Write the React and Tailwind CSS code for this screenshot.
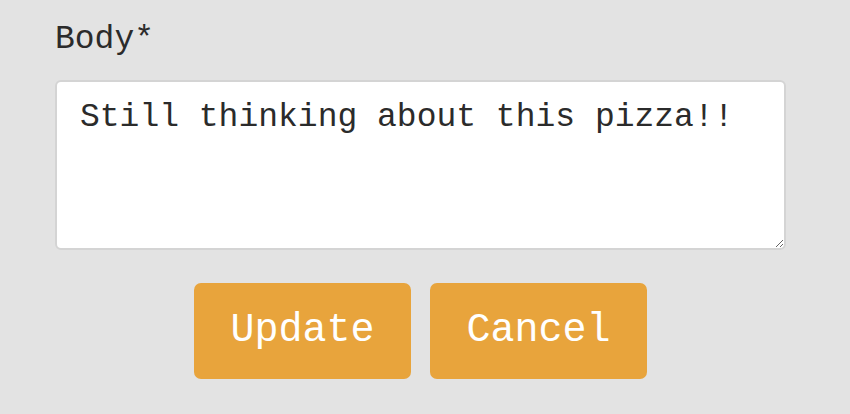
export default function App() {
  return (
    <div
      className="min-h-screen w-full bg-[#e3e3e3] text-[#2b2b2b]"
      style={{ fontFamily: '"Liberation Mono", monospace' }}
    >
      <form className="ml-[55px] w-[731px] pt-[23px]">
        <label htmlFor="body" className="block text-[33px] leading-[33px] font-light">
          Body*
        </label>
        <textarea
          id="body"
          defaultValue="Still thinking about this pizza!!"
          className="mt-[24px] block h-[170px] w-full rounded-[6px] border-2 border-[#d4d4d4] bg-white px-[23px] pt-[19px] text-[33px] leading-[33px] text-[#2b2b2b] outline-none"
          style={{ fontFamily: '"Liberation Mono", monospace' }}
        />
        <div className="mt-[33px] flex justify-center gap-[19px]">
          <button
            type="button"
            className="h-[96px] w-[217px] rounded-[7px] bg-[#e8a43c] text-[40px] text-white"
          >
            Update
          </button>
          <button
            type="button"
            className="h-[96px] w-[217px] rounded-[7px] bg-[#e8a43c] text-[40px] text-white"
          >
            Cancel
          </button>
        </div>
      </form>
    </div>
  );
}
